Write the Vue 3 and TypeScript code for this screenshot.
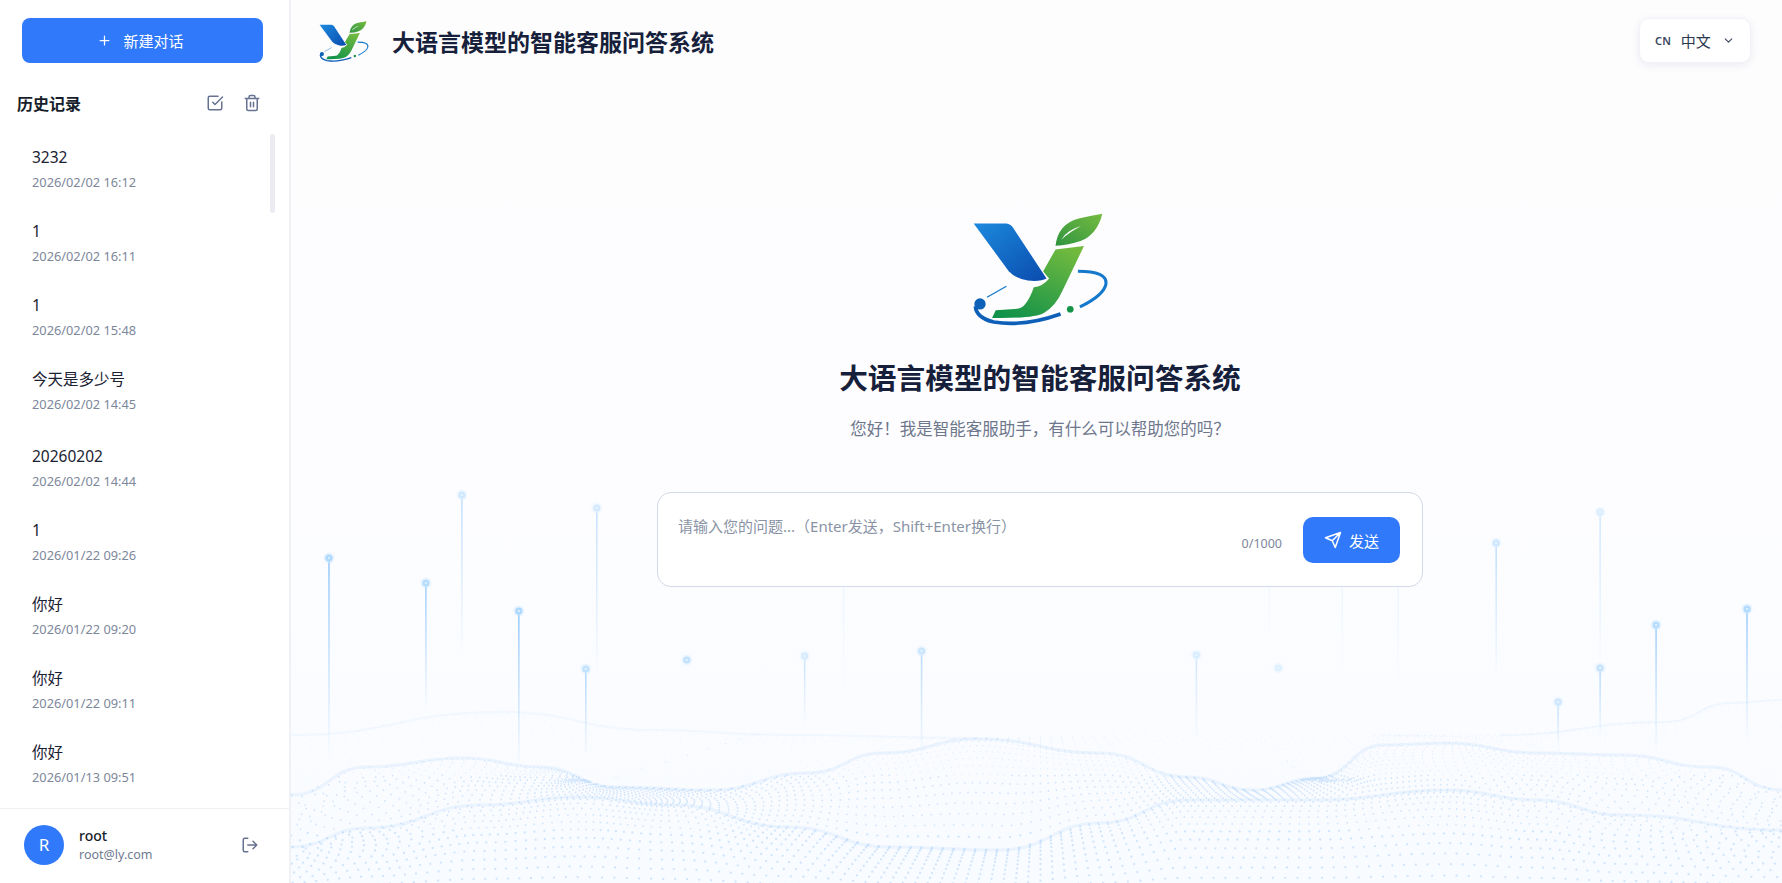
<template>
  <div class="page">
    <svg class="defs" width="0" height="0" aria-hidden="true">
      <defs>
        <linearGradient id="wing" x1="0" y1="0" x2="1" y2="1">
          <stop offset="0" stop-color="#1c8ade" />
          <stop offset="1" stop-color="#0a4bae" />
        </linearGradient>
        <linearGradient id="stem" x1="0.8" y1="0" x2="0.2" y2="1">
          <stop offset="0" stop-color="#72ba3e" />
          <stop offset="1" stop-color="#12924a" />
        </linearGradient>
        <linearGradient id="leaf" x1="0" y1="1" x2="1" y2="0">
          <stop offset="0" stop-color="#2f9440" />
          <stop offset="1" stop-color="#76bc40" />
        </linearGradient>
        <symbol id="logo" viewBox="95 60 410 350">
          <path d="M100 97H198Q210 98 218 110L318 262Q300 272 262 268Q225 262 205 240Z" fill="url(#wing)" />
          <path d="M345 175L430 165L365 300Q345 345 310 365Q280 382 155 380L166 357L235 352Q260 345 280 288Q305 287 326 262Q315 250 308 240Z" fill="url(#stem)" />
          <path d="M345 164Q352 98 415 82Q450 74 485 68Q470 130 420 150Q385 162 345 164Z" fill="url(#leaf)" />
          <path d="M362 146Q380 116 422 105Q388 122 362 146Z" fill="#fff" />
          <path d="M412 240Q500 240 496 278Q490 312 418 347" fill="none" stroke="#1479cc" stroke-width="9" />
          <path d="M360 368Q250 407 160 392Q108 380 105 345" fill="none" stroke="#0d5fb8" stroke-width="11" />
          <path d="M140 318L198 285" fill="none" stroke="#1479cc" stroke-width="4" />
          <circle cx="119" cy="338" r="17" fill="#0d62b8" />
          <circle cx="389" cy="354" r="10" fill="#159447" />
        </symbol>
      </defs>
    </svg>

    <aside class="sidebar">
      <button class="new-chat">
        <svg class="icon icon-16" viewBox="0 0 24 24"><path d="M12 5v14M5 12h14" /></svg>
        <span>新建对话</span>
      </button>
      <div class="history-head">
        <span class="history-title">历史记录</span>
        <div class="history-actions">
          <svg class="icon icon-18" viewBox="0 0 24 24">
            <path d="M21 10.5V19a2 2 0 0 1-2 2H5a2 2 0 0 1-2-2V5a2 2 0 0 1 2-2h11" />
            <path d="m9 11 3 3L22 4" />
          </svg>
          <svg class="icon icon-18" viewBox="0 0 24 24">
            <path d="M3 6h18M19 6v14a2 2 0 0 1-2 2H7a2 2 0 0 1-2-2V6M8 6V4a2 2 0 0 1 2-2h4a2 2 0 0 1 2 2v2M10 11v6M14 11v6" />
          </svg>
        </div>
      </div>
      <div class="history-wrap">
        <ul class="history-list">
          <li v-for="item in history" :key="item.date" class="history-item">
            <div class="item-name">{{ item.name }}</div>
            <div class="item-date">{{ item.date }}</div>
          </li>
        </ul>
        <div class="thumb"></div>
      </div>
      <div class="user">
        <div class="avatar">R</div>
        <div class="user-info">
          <div class="user-name">root</div>
          <div class="user-mail">root@ly.com</div>
        </div>
        <svg class="icon icon-18 logout" viewBox="0 0 24 24">
          <path d="M9 21H5a2 2 0 0 1-2-2V5a2 2 0 0 1 2-2h4M16 17l5-5-5-5M21 12H9" />
        </svg>
      </div>
    </aside>

    <main class="main">
      <svg class="backdrop" viewBox="290 0 1492 883" preserveAspectRatio="none" aria-hidden="true">
        <defs>
          <linearGradient id="fade" x1="0" y1="0" x2="0" y2="1">
            <stop offset="0" stop-color="#8cc4fb" />
            <stop offset="1" stop-color="#8cc4fb" stop-opacity="0" />
          </linearGradient>
        </defs>
        <path v-for="(r, i) in ridges" :key="'r' + i" :d="r.d" class="ridge" :stroke-width="r.w" :stroke-opacity="r.a" />
        <path
          v-for="(b, i) in dotPaths"
          :key="'d' + i"
          :d="b.d"
          class="dots"
          :stroke-width="b.size"
          :stroke-opacity="b.alpha"
        />
        <g v-for="(p, i) in pins" :key="'p' + i" :opacity="p.o">
          <rect v-if="p.y2 > p.y" :x="p.x - 0.75" :y="p.y" width="1.5" :height="p.y2 - p.y" fill="url(#fade)" />
          <circle v-if="p.dot" :cx="p.x" :cy="p.y" r="5.5" fill="#cfe8ff" fill-opacity="0.45" />
          <circle v-if="p.dot" :cx="p.x" :cy="p.y" r="3.6" fill="#a9d6fd" />
          <circle v-if="p.dot" :cx="p.x" :cy="p.y" r="1.3" fill="#d4ecff" />
        </g>
      </svg>

      <header class="topbar">
        <div class="brand">
          <svg class="logo-small"><use href="#logo" /></svg>
          <h1 class="brand-name">大语言模型的智能客服问答系统</h1>
        </div>
        <button class="lang">
          <span class="lang-code">CN</span>
          <span class="lang-name">中文</span>
          <svg class="icon icon-12" viewBox="0 0 24 24"><path d="m6 9 6 6 6-6" /></svg>
        </button>
      </header>

      <section class="welcome">
        <svg class="logo-big"><use href="#logo" /></svg>
        <h2 class="welcome-title">大语言模型的智能客服问答系统</h2>
        <p class="welcome-sub">您好！我是智能客服助手，有什么可以帮助您的吗？</p>
        <div class="composer">
          <div class="placeholder">请输入您的问题...（Enter发送，Shift+Enter换行）</div>
          <div class="composer-side">
            <span class="count">0/1000</span>
            <button class="send">
              <svg class="icon icon-18" viewBox="0 0 24 24">
                <path d="m22 2-7 20-4-9-9-4ZM22 2 11 13" />
              </svg>
              <span>发送</span>
            </button>
          </div>
        </div>
      </section>
    </main>
  </div>
</template>

<script setup lang="ts">
interface Pin {
  x: number
  y: number
  y2: number
  o: number
  dot: boolean
}

type Curve = number[][]

const history = [
  { name: "3232", date: "2026/02/02 16:12" },
  { name: "1", date: "2026/02/02 16:11" },
  { name: "1", date: "2026/02/02 15:48" },
  { name: "今天是多少号", date: "2026/02/02 14:45" },
  { name: "20260202", date: "2026/02/02 14:44" },
  { name: "1", date: "2026/01/22 09:26" },
  { name: "你好", date: "2026/01/22 09:20" },
  { name: "你好", date: "2026/01/22 09:11" },
  { name: "你好", date: "2026/01/13 09:51" },
]

const pins: Pin[] = [
  { x: 328, y: 558, y2: 760, o: 0.95, dot: true },
  { x: 425, y: 583, y2: 713, o: 0.85, dot: true },
  { x: 461, y: 495, y2: 657, o: 0.55, dot: true },
  { x: 518, y: 611, y2: 767, o: 0.95, dot: true },
  { x: 596, y: 508, y2: 680, o: 0.5, dot: true },
  { x: 585, y: 669, y2: 757, o: 0.7, dot: true },
  { x: 686, y: 660, y2: 660, o: 0.7, dot: true },
  { x: 804, y: 656, y2: 727, o: 0.45, dot: true },
  { x: 843, y: 587, y2: 700, o: 0.12, dot: false },
  { x: 921, y: 651, y2: 760, o: 0.6, dot: true },
  { x: 1196, y: 655, y2: 740, o: 0.4, dot: true },
  { x: 1278, y: 668, y2: 668, o: 0.35, dot: true },
  { x: 1269, y: 587, y2: 640, o: 0.1, dot: false },
  { x: 1342, y: 587, y2: 680, o: 0.12, dot: false },
  { x: 1398, y: 587, y2: 700, o: 0.12, dot: false },
  { x: 1496, y: 543, y2: 680, o: 0.55, dot: true },
  { x: 1600, y: 512, y2: 667, o: 0.4, dot: true },
  { x: 1600, y: 668, y2: 740, o: 0.65, dot: true },
  { x: 1558, y: 702, y2: 750, o: 0.55, dot: true },
  { x: 1656, y: 625, y2: 753, o: 0.85, dot: true },
  { x: 1747, y: 609, y2: 743, o: 0.9, dot: true },
]

// crest lines read off the picture, far to near
const farCrest: Curve = [[290, 735], [500, 712], [654, 730], [787, 735], [977, 738], [1150, 735], [1300, 735], [1500, 735], [1665, 722], [1731, 703], [1782, 700]]
const mainCrest: Curve = [[290, 795], [366, 767], [462, 758], [539, 767], [615, 787], [711, 790], [807, 773], [883, 753], [977, 739], [1100, 753], [1187, 777], [1252, 790], [1317, 778], [1383, 745], [1448, 743], [1535, 753], [1622, 755], [1709, 767], [1782, 790]]
const nearCrest: Curve = [[290, 847], [366, 828], [481, 805], [577, 797], [673, 805], [787, 827], [890, 847], [1000, 850], [1100, 823], [1187, 800], [1317, 800], [1448, 790], [1535, 800], [1622, 815], [1782, 830]]
const floor: Curve = [[290, 900], [1782, 900]]
const bands = [farCrest, mainCrest, nearCrest, floor]

function smooth(pts: Curve): string {
  let d = `M${pts[0][0]} ${pts[0][1]}`
  for (let i = 1; i < pts.length; i += 1) {
    const [ax, ay] = pts[i - 1]
    const [bx, by] = pts[i]
    const mx = (ax + bx) / 2
    d += `C${mx} ${ay} ${mx} ${by} ${bx} ${by}`
  }
  return d
}

function heightAt(curve: Curve, x: number): number {
  for (let i = 1; i < curve.length; i += 1) {
    if (x <= curve[i][0]) {
      const [ax, ay] = curve[i - 1]
      const [bx, by] = curve[i]
      const t = Math.max(0, (x - ax) / (bx - ax))
      return ay + (by - ay) * (3 * t * t - 2 * t * t * t)
    }
  }
  return curve[curve.length - 1][1]
}

const ridges = [
  { w: 2, a: 0.25, d: smooth(farCrest.slice(0, 5)) },
  { w: 3, a: 0.5, d: smooth(mainCrest) },
  { w: 3, a: 0.5, d: smooth(nearCrest) },
  { w: 2, a: 0.3, d: smooth(farCrest.slice(7)) },
]

// dotted surface: columns fan out from a point above the centre,
// rows bunch up right under each crest
function buildDots(): Array<{ d: string; size: number; alpha: number }> {
  const buckets = [
    { d: "", size: 1, alpha: 0.14 },
    { d: "", size: 1.3, alpha: 0.26 },
    { d: "", size: 1.8, alpha: 0.36 },
    { d: "", size: 2.3, alpha: 0.38 },
  ]
  const cx = 1040
  const rowsPerBand = [9, 13, 13]
  for (let k = -210; k <= 210; k += 1) {
    for (let b = 0; b < rowsPerBand.length; b += 1) {
      for (let j = 0; j < rowsPerBand[b]; j += 1) {
        const t = Math.pow(j / rowsPerBand[b], 1.5)
        let y = 780
        let x = cx
        for (let pass = 0; pass < 2; pass += 1) {
          x = cx + k * (3.5 + (9 * Math.max(0, y - 700)) / 183)
          const top = heightAt(bands[b], x)
          y = top + (heightAt(bands[b + 1], x) - top) * t
        }
        if (x < 290 || x > 1782 || y > 884) continue
        if (b === 0 && k % 2 !== 0) continue
        const idx = b === 0 ? 0 : y < 775 ? 1 : y < 830 ? 2 : 3
        buckets[idx].d += `M${x.toFixed(1)} ${y.toFixed(1)}h0`
      }
    }
  }
  return buckets
}

const dotPaths = buildDots()
</script>

<style>
html,
body {
  margin: 0;
  background: #fff;
}
</style>

<style scoped>
.page {
  display: flex;
  width: 100%;
  height: 883px;
  overflow: hidden;
  font-family: "Noto Sans", "Noto Sans CJK SC", sans-serif;
  color: #1a2233;
}

.defs {
  position: absolute;
}

.icon path {
  fill: none;
  stroke: currentColor;
  stroke-width: 2;
  stroke-linecap: round;
  stroke-linejoin: round;
}

.icon-12 {
  width: 13px;
  height: 13px;
}

.icon-16 {
  width: 15px;
  height: 15px;
}

.icon-18 {
  width: 18px;
  height: 18px;
}

.sidebar {
  flex: none;
  display: flex;
  flex-direction: column;
  width: 289px;
  height: 883px;
  background: #fff;
  border-right: 2px solid #eff1f5;
  box-sizing: content-box;
}

.new-chat {
  display: flex;
  align-items: center;
  justify-content: center;
  gap: 11px;
  flex: none;
  height: 45px;
  margin: 18px 26px 0 22px;
  padding: 0 4px 0 0;
  border: none;
  border-radius: 8px;
  background: #3079fa;
  color: #fff;
  font: inherit;
  font-size: 15px;
}

.history-head {
  display: flex;
  align-items: center;
  justify-content: space-between;
  flex: none;
  height: 24px;
  margin: 28px 28px 0 17px;
}

.history-title {
  font-size: 16px;
  font-weight: 700;
  color: #161d2b;
}

.history-actions {
  display: flex;
  gap: 19px;
  color: #667290;
}

.history-wrap {
  position: relative;
  flex: 1;
  min-height: 0;
  margin-top: 16px;
  overflow: hidden;
}

.history-list {
  margin: 0;
  padding: 0;
  list-style: none;
}

.history-item {
  padding: 15px 32px 14px;
}

.history-item:nth-child(5) {
  margin-top: 3px;
}

.item-name {
  font-size: 15.5px;
  line-height: 22px;
  color: #1a2233;
}

.item-date {
  margin-top: 5px;
  font-size: 12.8px;
  line-height: 18px;
  color: #7d879b;
}

.thumb {
  position: absolute;
  top: 3px;
  right: 14px;
  width: 5px;
  height: 79px;
  border-radius: 3px;
  background: #eaecf1;
}

.user {
  display: flex;
  align-items: center;
  flex: none;
  height: 71px;
  padding: 0 30px 3px 24px;
  border-top: 1px solid #eff1f5;
  background: #fff;
}

.avatar {
  display: flex;
  align-items: center;
  justify-content: center;
  width: 40px;
  height: 40px;
  border-radius: 50%;
  background: #3079fa;
  color: #fff;
  font-size: 17px;
}

.user-info {
  flex: 1;
  margin-left: 15px;
}

.user-name {
  font-size: 14px;
  font-weight: 500;
  line-height: 20px;
  color: #161d2b;
}

.user-mail {
  font-size: 12.5px;
  line-height: 18px;
  color: #6f7a90;
}

.logout {
  color: #667290;
}

.main {
  position: relative;
  flex: 1;
  min-width: 0;
  display: flex;
  flex-direction: column;
  background: linear-gradient(180deg, #fdfdfe 0%, #fdfdff 55%, #f8fbff 100%);
}

.backdrop {
  position: absolute;
  inset: 0;
  width: 100%;
  height: 100%;
  filter: blur(0.5px);
}

.backdrop .ridge {
  fill: none;
  stroke: #dcecfe;
  stroke-linecap: round;
}

.backdrop .dots {
  fill: none;
  stroke: #8fc0f5;
  stroke-linecap: round;
}

.topbar {
  position: relative;
  display: flex;
  align-items: center;
  justify-content: space-between;
  flex: none;
  height: 82px;
  padding: 0 31px 0 28px;
}

.brand {
  display: flex;
  align-items: center;
  gap: 23px;
}

.logo-small {
  width: 50px;
  height: 43px;
}

.brand-name {
  margin: 0;
  font-size: 23px;
  font-weight: 700;
  color: #16203a;
}

.lang {
  display: flex;
  align-items: center;
  justify-content: center;
  width: 112px;
  height: 45px;
  margin-top: -1px;
  border: 1px solid #f1f3f7;
  border-radius: 10px;
  background: #fff;
  box-shadow: 0 2px 8px rgba(40, 60, 110, 0.09);
  color: #3b4660;
  font: inherit;
}

.lang-code {
  font-size: 11px;
  font-weight: 600;
  margin-right: 10px;
}

.lang-name {
  font-size: 15px;
  color: #2a3550;
  margin-right: 11px;
}

.welcome {
  position: relative;
  display: flex;
  flex-direction: column;
  align-items: center;
  padding: 129px 0 0 7px;
}

.logo-big {
  width: 137px;
  height: 117px;
}

.welcome-title {
  margin: 28px 0 0;
  font-size: 28.7px;
  font-weight: 700;
  line-height: 44px;
  color: #16203a;
}

.welcome-sub {
  margin: 18px 0 0;
  font-size: 16.5px;
  line-height: 22px;
  color: #6d778c;
}

.composer {
  position: relative;
  display: flex;
  justify-content: space-between;
  width: 766px;
  height: 95px;
  margin-top: 52px;
  box-sizing: border-box;
  padding: 23px 22px 0 20px;
  border: 1px solid #d3d9e8;
  border-radius: 14px;
  background: rgba(255, 255, 255, 0.9);
}

.placeholder {
  font-size: 15px;
  line-height: 20px;
  color: #8a93a6;
}

.composer-side {
  display: flex;
  align-items: center;
  align-self: flex-start;
  gap: 21px;
  margin-top: 1px;
}

.count {
  margin-top: 6px;
  font-size: 12.5px;
  color: #7d879b;
}

.send {
  display: flex;
  align-items: center;
  justify-content: center;
  gap: 7px;
  width: 97px;
  height: 46px;
  border: none;
  border-radius: 10px;
  background: #3079fa;
  color: #fff;
  font: inherit;
  font-size: 15px;
}
</style>
